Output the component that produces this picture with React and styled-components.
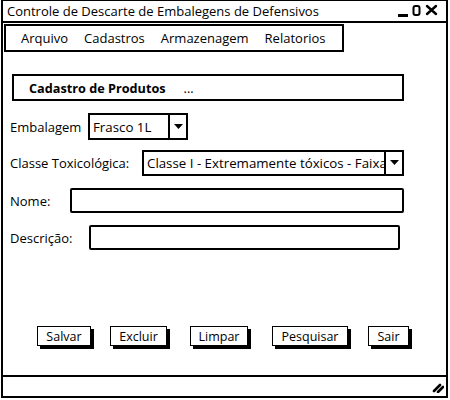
import styled, { createGlobalStyle } from "styled-components";

const GlobalStyle = createGlobalStyle`
  html, body {
    margin: 0;
    padding: 0;
    background: #fff;
  }
  body {
    font-family: "Open Sans", "DejaVu Sans", sans-serif;
    color: #000;
  }
`;

const Window = styled.div`
  box-sizing: border-box;
  margin-left: 1px;
  width: 447px;
  height: 398px;
  border: 2px solid #000;
  border-top-width: 1px;
  display: flex;
  flex-direction: column;
`;

const TitleBar = styled.div`
  height: 20px;
  border-bottom: 2px solid #000;
  display: flex;
  align-items: center;
  padding: 0 4px;
  font-size: 13px;
`;

const Title = styled.span`
  flex: 1;
`;

const MenuBar = styled.div`
  box-sizing: border-box;
  margin: 1px 0 0 1px;
  width: 340px;
  height: 28px;
  border: 2px solid #000;
  display: flex;
  align-items: center;
  padding-left: 15px;
  gap: 16px;
  font-size: 13px;
`;

const Content = styled.div`
  flex: 1;
  display: flex;
  flex-direction: column;
  padding-left: 7px;
`;

const Heading = styled.div`
  box-sizing: border-box;
  margin: 22px 0 0 2px;
  width: 392px;
  height: 27px;
  border: 2px solid #000;
  display: flex;
  align-items: center;
  padding-left: 15px;
  font-size: 12.7px;
  font-weight: 700;
`;

const Dots = styled.span`
  margin-left: 18px;
  font-weight: 400;
`;

const Row = styled.div`
  display: flex;
  align-items: center;
  margin-top: ${({ $top }) => $top}px;
  font-size: 13px;
`;

const Label = styled.span`
  width: ${({ $w }) => $w}px;
  white-space: nowrap;
`;

const Select = styled.div`
  box-sizing: border-box;
  width: ${({ $w }) => $w}px;
  height: ${({ $h }) => $h || 27}px;
  border: 2px solid #000;
  display: flex;
  align-items: stretch;
  font-size: 13.3px;
`;

const SelectText = styled.div`
  flex: 1;
  min-width: 0;
  overflow: hidden;
  white-space: nowrap;
  display: flex;
  align-items: center;
  padding-left: 3px;
`;

const Arrow = styled.div`
  width: 16px;
  border-left: 2px solid #000;
  display: flex;
  align-items: center;
  justify-content: center;
`;

const Input = styled.div`
  box-sizing: border-box;
  width: ${({ $w }) => $w}px;
  height: 25px;
  border: 2px solid #000;
  border-radius: 2px;
`;

const Buttons = styled.div`
  display: flex;
  margin: 76px 0 0 27px;
`;

const Button = styled.div`
  box-sizing: border-box;
  width: ${({ $w }) => $w}px;
  margin-right: ${({ $gap }) => $gap}px;
  height: 20px;
  border: 1.5px solid #000;
  box-shadow: 3px 3px 0 #000;
  display: flex;
  align-items: center;
  justify-content: center;
  font-size: 12.5px;
`;

const StatusBar = styled.div`
  height: 19px;
  border-top: 2px solid #000;
  display: flex;
  align-items: center;
  justify-content: flex-end;
  padding-right: 2px;
`;

function WindowControls() {
  return (
    <svg width="44" height="14" viewBox="0 0 44 14">
      <rect x="0" y="10" width="10" height="3" fill="#000" />
      <rect x="15.5" y="2" width="6" height="9" rx="2" fill="none" stroke="#000" strokeWidth="2" />
      <path d="M29 2 L38 10 M38 2 L29 10" stroke="#000" strokeWidth="2.4" strokeLinecap="round" />
    </svg>
  );
}

function Grip() {
  return (
    <svg width="12" height="12" viewBox="0 0 12 12">
      <path d="M2 10 L8 4 M6 11 L11 6" stroke="#000" strokeWidth="2.6" strokeLinecap="round" />
    </svg>
  );
}

function DownArrow() {
  return (
    <svg width="9" height="6" viewBox="0 0 9 6">
      <path d="M0 0 H9 L4.5 5 Z" fill="#000" />
    </svg>
  );
}

export default function App() {
  return (
    <>
      <GlobalStyle />
      <Window>
        <TitleBar>
          <Title>Controle de Descarte de Embalegens de Defensivos</Title>
          <WindowControls />
        </TitleBar>
        <MenuBar>
          <span>Arquivo</span>
          <span>Cadastros</span>
          <span>Armazenagem</span>
          <span>Relatorios</span>
        </MenuBar>
        <Content>
          <Heading>
            Cadastro de Produtos<Dots>...</Dots>
          </Heading>
          <Row $top={12}>
            <Label $w={78}>Embalagem</Label>
            <Select $w={100}>
              <SelectText>Frasco 1L</SelectText>
              <Arrow><DownArrow /></Arrow>
            </Select>
          </Row>
          <Row $top={10}>
            <Label $w={132}>Classe Toxicológica:</Label>
            <Select $w={262} $h={26}>
              <SelectText>Classe I - Extremamente tóxicos - Faixa</SelectText>
              <Arrow><DownArrow /></Arrow>
            </Select>
          </Row>
          <Row $top={12}>
            <Label $w={60}>Nome:</Label>
            <Input $w={334} />
          </Row>
          <Row $top={12}>
            <Label $w={79}>Descrição:</Label>
            <Input $w={311} />
          </Row>
          <Buttons>
            <Button $w={54} $gap={19}>Salvar</Button>
            <Button $w={57} $gap={23}>Excluir</Button>
            <Button $w={58} $gap={24}>Limpar</Button>
            <Button $w={76} $gap={20}>Pesquisar</Button>
            <Button $w={41} $gap={0}>Sair</Button>
          </Buttons>
        </Content>
        <StatusBar>
          <Grip />
        </StatusBar>
      </Window>
    </>
  );
}
